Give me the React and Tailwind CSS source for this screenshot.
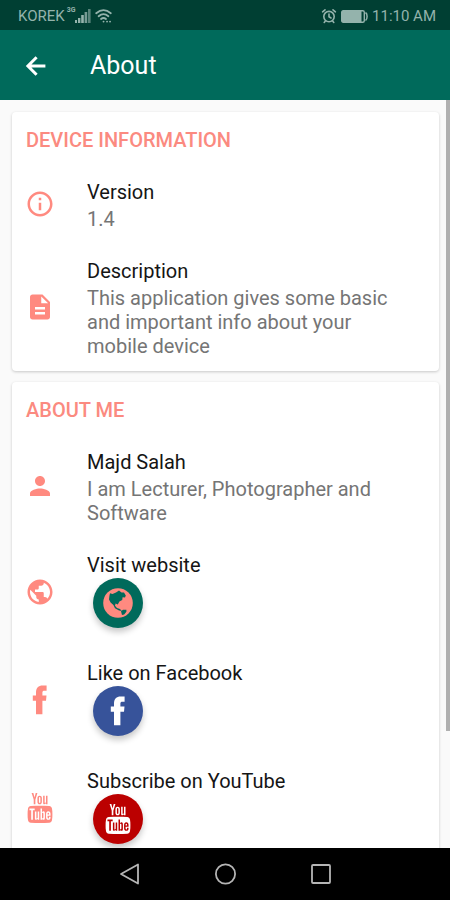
import { MdInfoOutline, MdDescription, MdPerson, MdPublic } from 'react-icons/md';
import { TfiYoutube } from 'react-icons/tfi';

const BackIcon = (props) => (
  <svg viewBox="0 0 28 28" fill="none" stroke="currentColor" strokeWidth="3" aria-hidden="true" {...props}>
    <path d="M23.4 14H6.5M14.6 5.2 5.9 14l8.7 8.8" />
  </svg>
);

const AlarmIcon = (props) => (
  <svg viewBox="0 0 16 16" fill="none" stroke="currentColor" strokeWidth="1.6" strokeLinecap="round" aria-hidden="true" {...props}>
    <circle cx="8" cy="8.6" r="5.2" />
    <path d="M8 6v2.8l2 1.2M1.6 3.8 4 1.8M14.4 3.8 12 1.8M4.2 13.2l-1 1.2M11.8 13.2l1 1.2" />
  </svg>
);

const FacebookIcon = (props) => (
  <svg viewBox="0 0 30 30" fill="currentColor" aria-hidden="true" {...props}>
    <path d="M11 29.2V15.8H7.8V10.4H11V7.6C11 3 13.5.6 17.6.6H21.6V5.7H19.4C18 5.7 17.4 6.3 17.4 7.6V10.4H21.5L21 15.8H17.4V29.2z" />
  </svg>
);

const GlobeIcon = ({ landClassName, ...props }) => (
  <svg viewBox="0 0 30 30" aria-hidden="true" {...props}>
    <circle cx="15" cy="15" r="14.8" fill="currentColor" />
    <path
      className={landClassName}
      d="M7 5.2 9.5 6 13 4.6 16 2.6 18.5 4.4 21 4.6 22.8 7.6 22 9.6 19.6 9.2 19.2 12 16.4 13.6 14.8 16.4 12.6 15.6 12 17.8 14 20 17 21 18.8 23 16 22.6 12 20.2 10.4 17 7.6 14.6 6 11.4 6.4 8zM18 23.2 20 21.8 23.4 21.8 23.4 23.8 21.2 26.4 19 27z"
    />
  </svg>
);

const SignalIcon = (props) => (
  <svg viewBox="0 0 16 14" fill="currentColor" aria-hidden="true" {...props}>
    <rect x="0" y="11" width="2" height="3" />
    <rect x="3" y="9" width="2.4" height="5" />
    <rect x="6.2" y="6" width="2.6" height="8" />
    <rect x="9.6" y="3" width="2.6" height="11" opacity="0.8" />
    <rect x="13" y="0" width="2.6" height="14" opacity="0.6" />
  </svg>
);

const WifiIcon = (props) => (
  <svg viewBox="0 0 18 14" fill="none" stroke="currentColor" strokeWidth="1.8" strokeLinecap="round" aria-hidden="true" {...props}>
    <path d="M1.2 4.2Q8.5-2 15.8 4.2" />
    <path d="M3.6 7.2Q8.5 3 13.4 7.2" />
    <path d="M6 10Q8.5 8 11 10" />
    <path d="M8.5 12.6h.1M12 12.6h.1M15 12.6h.1" />
  </svg>
);

const BatteryIcon = (props) => (
  <svg viewBox="0 0 27 13" aria-hidden="true" {...props}>
    <rect x="0.7" y="0.7" width="22.6" height="11.6" rx="1.5" fill="none" stroke="currentColor" strokeWidth="1.4" />
    <rect x="1" y="1" width="19.5" height="11" fill="currentColor" />
    <path d="M24.5 2.5q1.6 1 1.6 4t-1.6 4" fill="none" stroke="currentColor" strokeWidth="1.5" />
  </svg>
);

function Card({ title, children }) {
  return (
    <section className="flex flex-col gap-px rounded-sm bg-white pb-px shadow-[0_1px_3px_rgba(0,0,0,0.2)]">
      <h2 className="px-[14px] pt-4 pb-3 text-xl leading-6 font-medium text-[#fb8a80]">{title}</h2>
      {children}
    </section>
  );
}

function Row({ icon, title, children }) {
  return (
    <div className="flex items-center py-3 pr-7 pl-[13px]">
      <div className="flex w-[62px] shrink-0 text-[#ff8a80]">{icon}</div>
      <div className="min-w-0 flex-1">
        <h3 className="text-xl leading-[30px] text-[#151515]">{title}</h3>
        {children}
      </div>
    </div>
  );
}

const Text = ({ children }) => <p className="text-xl leading-6 text-[#757575]">{children}</p>;

function RoundLink({ label, className, children }) {
  return (
    <a
      href="#"
      aria-label={label}
      className={`-mt-0.5 mb-[5px] ml-1.5 flex size-[50px] items-center justify-center rounded-full shadow-[0_4px_6px_rgba(0,0,0,0.22)] ${className}`}
    >
      {children}
    </a>
  );
}

export default function App() {
  return (
    <div className="flex h-screen flex-col overflow-hidden bg-[#fafafa] font-['Roboto',sans-serif]">
      <div className="flex h-[30px] shrink-0 items-center justify-between bg-[#003f33] pt-0.5 pr-[14px] pl-[18px] text-[#94b3ac]">
        <div className="flex items-center">
          <span className="text-[15px] leading-5">KOREK</span>
          <span className="ml-0.5 self-start text-[7px] leading-2 font-bold">3G</span>
          <SignalIcon className="h-[14px] w-4" />
          <WifiIcon className="ml-1 h-[14px] w-[18px]" />
        </div>
        <div className="flex items-center">
          <AlarmIcon className="mr-1 size-4" />
          <BatteryIcon className="mr-1 h-[13px] w-[27px]" />
          <span className="text-[15px] leading-5">11:10 AM</span>
        </div>
      </div>

      <header className="flex h-[70px] shrink-0 items-center bg-[#006a5b] pt-0.5 pl-[22px] text-white">
        <button type="button" aria-label="Back" className="mr-10">
          <BackIcon className="size-7" />
        </button>
        <h1 className="text-[25px] leading-8">About</h1>
      </header>

      <main className="relative min-h-0 flex-1 overflow-hidden">
        <div className="flex flex-col gap-[11px] py-3 pr-[11px] pl-3">
          <Card title="DEVICE INFORMATION">
            <Row icon={<MdInfoOutline className="size-[30px]" />} title="Version">
              <Text>1.4</Text>
            </Row>
            <Row icon={<MdDescription className="size-[30px]" />} title="Description">
              <Text>This application gives some basic and important info about your mobile device</Text>
            </Row>
          </Card>

          <Card title="ABOUT ME">
            <Row icon={<MdPerson className="size-[30px]" />} title="Majd Salah">
              <Text>I am Lecturer, Photographer and Software</Text>
            </Row>
            <Row icon={<MdPublic className="size-[30px]" />} title="Visit website">
              <RoundLink label="Website" className="bg-[#006a5b] text-[#ff8a80]">
                <GlobeIcon className="size-[30px]" landClassName="fill-[#006a5b]" />
              </RoundLink>
            </Row>
            <Row icon={<FacebookIcon className="size-[30px]" />} title="Like on Facebook">
              <RoundLink label="Facebook" className="bg-[#37539a] text-white">
                <FacebookIcon className="size-[30px]" />
              </RoundLink>
            </Row>
            <Row icon={<TfiYoutube className="size-[30px]" />} title="Subscribe on YouTube">
              <RoundLink label="YouTube" className="bg-[#bb0000] text-white">
                <TfiYoutube className="size-[30px]" />
              </RoundLink>
            </Row>
          </Card>
        </div>
        {/* scroll indicator */}
        <div className="absolute top-0 right-0 h-[84.4%] w-1 bg-[#b0b0b0]" />
      </main>

      <nav className="flex h-[52px] shrink-0 items-center justify-center gap-[71px] bg-black text-[#b5b5b5]">
        <button type="button" aria-label="Go back">
          <svg viewBox="0 0 24 24" className="size-6" fill="none" stroke="currentColor" strokeWidth="1.8" strokeLinejoin="round">
            <path d="M20 2.5v19L3 12z" />
          </svg>
        </button>
        <button type="button" aria-label="Home">
          <svg viewBox="0 0 24 24" className="size-6" fill="none" stroke="currentColor" strokeWidth="1.8">
            <circle cx="12.5" cy="12" r="9.6" />
          </svg>
        </button>
        <button type="button" aria-label="Recent apps">
          <svg viewBox="0 0 24 24" className="size-6" fill="none" stroke="currentColor" strokeWidth="1.8">
            <rect x="4" y="3" width="18" height="18" rx="1" />
          </svg>
        </button>
      </nav>
    </div>
  );
}
